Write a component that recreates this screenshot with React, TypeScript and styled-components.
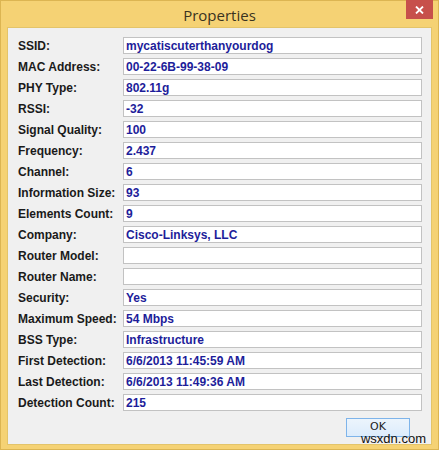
import React from 'react'
import styled, { createGlobalStyle } from 'styled-components'

const GlobalStyle = createGlobalStyle`
  html, body {
    margin: 0;
    padding: 0;
    background: #ffffff;
  }
`

const Window = styled.div`
  position: relative;
  width: 439px;
  height: 450px;
  box-sizing: border-box;
  background: #f5d274;
  border: 1px solid #dcb552;
  display: flex;
  flex-direction: column;
`

const TitleBar = styled.div`
  position: relative;
  height: 26px;
  display: flex;
  align-items: center;
  justify-content: center;
  font-family: 'Open Sans', 'Noto Sans', sans-serif;
  font-size: 15px;
  color: #3a3220;
  padding-top: 1px;
`

const CloseButton = styled.div`
  position: absolute;
  top: -1px;
  right: 5px;
  width: 27px;
  height: 19px;
  background: #c7504b;
  display: flex;
  align-items: center;
  justify-content: center;
`

const Client = styled.div`
  margin: 0 6px 4px 6px;
  flex: 1;
  background: #f0f0f0;
  border: 1px solid #e3c46a;
  padding: 9px 10px 7px 10px;
  display: flex;
  flex-direction: column;
`

const Form = styled.div`
  display: grid;
  grid-template-columns: 105px 299px;
  grid-auto-rows: 17px;
  row-gap: 4px;
`

const Label = styled.div`
  font-family: 'Liberation Sans', Arial, sans-serif;
  font-weight: bold;
  font-size: 12px;
  color: #1a1a1a;
  display: flex;
  align-items: center;
`

const Field = styled.div`
  box-sizing: border-box;
  background: #ffffff;
  border: 1px solid #c2c2c2;
  padding: 0 2px;
  font-family: 'Liberation Sans', Arial, sans-serif;
  font-weight: bold;
  font-size: 12px;
  color: #1d1d9a;
  display: flex;
  align-items: center;
  white-space: nowrap;
`

const Footer = styled.div`
  display: flex;
  justify-content: flex-end;
  margin-top: 7px;
`

const OkButton = styled.button`
  width: 64px;
  height: 19px;
  box-sizing: border-box;
  border: 1px solid #7eb4ea;
  background: linear-gradient(#ecf4fc, #dcecfc);
  font-family: 'DejaVu Sans', 'Liberation Sans', sans-serif;
  font-size: 11px;
  line-height: 11px;
  color: #222;
  padding: 0 0 2px 0;
  margin-right: 11px;
`

const Watermark = styled.div`
  position: absolute;
  right: 12px;
  bottom: 4px;
  font-family: 'Liberation Sans', Arial, sans-serif;
  font-size: 13px;
  line-height: 12px;
  color: #111;
`

const rows: [string, string][] = [
  ['SSID:', 'mycatiscuterthanyourdog'],
  ['MAC Address:', '00-22-6B-99-38-09'],
  ['PHY Type:', '802.11g'],
  ['RSSI:', '-32'],
  ['Signal Quality:', '100'],
  ['Frequency:', '2.437'],
  ['Channel:', '6'],
  ['Information Size:', '93'],
  ['Elements Count:', '9'],
  ['Company:', 'Cisco-Linksys, LLC'],
  ['Router Model:', ''],
  ['Router Name:', ''],
  ['Security:', 'Yes'],
  ['Maximum Speed:', '54 Mbps'],
  ['BSS Type:', 'Infrastructure'],
  ['First Detection:', '6/6/2013 11:45:59 AM'],
  ['Last Detection:', '6/6/2013 11:49:36 AM'],
  ['Detection Count:', '215'],
]

const App = () => {
  return (
    <>
      <GlobalStyle />
      <Window>
        <TitleBar>
          Properties
          <CloseButton>
            <svg width="9" height="8" viewBox="0 0 9 8">
              <path d="M1 0.5 L8 7.5 M8 0.5 L1 7.5" stroke="#fff" strokeWidth="1.8" />
            </svg>
          </CloseButton>
        </TitleBar>
        <Client>
          <Form>
            {rows.map(([label, value]) => (
              <React.Fragment key={label}>
                <Label>{label}</Label>
                <Field>{value}</Field>
              </React.Fragment>
            ))}
          </Form>
          <Footer>
            <OkButton>OK</OkButton>
          </Footer>
        </Client>
        <Watermark>wsxdn.com</Watermark>
      </Window>
    </>
  )
}

export default App
